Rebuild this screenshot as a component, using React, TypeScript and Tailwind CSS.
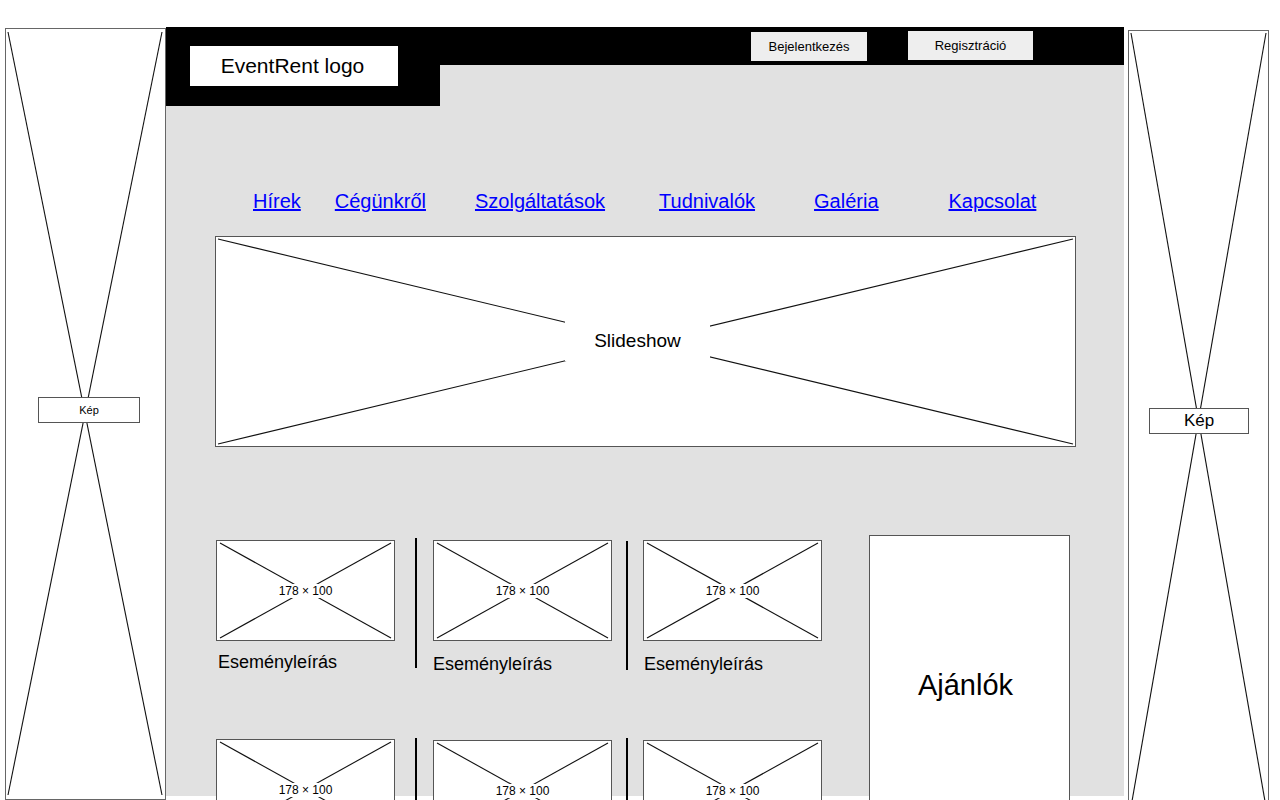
import React from "react";

const font = "font-['Liberation_Sans',Arial,sans-serif]";

function Cross({ w, h, x1, y1, x2, y2 }: { w: number; h: number; x1: number; y1: number; x2: number; y2: number }) {
  // vázlat-kereszt a helyőrzőkhöz
  return (
    <svg className="absolute inset-0" width={w} height={h} viewBox={`0 0 ${w} ${h}`}>
      <line x1={x1} y1={y1} x2={x2} y2={y2} stroke="#111" strokeWidth="1.1" />
      <line x1={x2} y1={y1} x2={x1} y2={y2} stroke="#111" strokeWidth="1.1" />
    </svg>
  );
}

function Thumb() {
  return (
    <div className="relative w-[179px] h-[101px] border border-[#555] bg-white">
      <Cross w={177} h={99} x1={3} y1={2} x2={174} y2={97} />
      <div className="absolute inset-0 flex items-center justify-center">
        <span className="bg-white px-[3px] text-[12px] leading-[14px] text-black">178 × 100</span>
      </div>
    </div>
  );
}

function Divider({ top, height }: { top: string; height: string }) {
  return <div className={`w-[2px] bg-black shrink-0 ${top} ${height}`} />;
}

const links = [
  { label: "Hírek", ml: "ml-[87px]" },
  { label: "Cégünkről", ml: "ml-[34px]" },
  { label: "Szolgáltatások", ml: "ml-[49px]" },
  { label: "Tudnivalók", ml: "ml-[54px]" },
  { label: "Galéria", ml: "ml-[59px]" },
  { label: "Kapcsolat", ml: "ml-[70px]" },
];

export default function App() {
  return (
    <div className={`w-[1280px] h-[800px] overflow-hidden bg-white flex items-start ${font} text-black`}>
      {/* bal oldali kép */}
      <div className="relative ml-[5px] mt-[28px] w-[161px] h-[772px] shrink-0 border border-[#666] bg-white">
        <Cross w={159} h={770} x1={2} y1={3} x2={156} y2={766} />
        <div className="absolute left-[32px] top-[368px] w-[102px] h-[26px] border border-[#555] bg-white flex items-center justify-center text-[11px]">
          Kép
        </div>
      </div>

      {/* középső tartalom */}
      <div className="mt-[27px] w-[958px] h-[769px] shrink-0 bg-[#e1e1e1]">
        <div className="flex items-start h-[79px]">
          <div className="w-[274px] h-[79px] bg-black pt-[19px] pl-[24px]">
            <div className="w-[208px] h-[40px] bg-white flex items-center justify-center pr-[3px] pb-[1px] text-[21px]">
              EventRent logo
            </div>
          </div>
          <div className="flex-1 h-[38px] bg-black flex items-start pl-[311px]">
            <div className="mt-[5px] w-[116px] h-[29px] bg-[#eeeeee] flex items-center justify-center text-[13px]">
              Bejelentkezés
            </div>
            <div className="ml-[41px] mt-[4px] w-[125px] h-[29px] bg-[#eeeeee] flex items-center justify-center text-[13px]">
              Regisztráció
            </div>
          </div>
        </div>

        <nav className="mt-[84px] flex text-[20px] leading-[23px]">
          {links.map((l) => (
            <a key={l.label} href="#" className={`${l.ml} text-[#0000ff] underline`}>
              {l.label}
            </a>
          ))}
        </nav>

        <div className="relative mt-[23px] ml-[49px] w-[861px] h-[211px] border border-[#555] bg-white">
          <Cross w={859} h={209} x1={2} y1={2} x2={857} y2={207} />
          <div className="absolute left-[349px] top-[84px] w-[145px] h-[40px] bg-white flex items-center justify-center text-[19px]">
            Slideshow
          </div>
        </div>

        <div className="mt-[88px] flex items-start">
          <div className="ml-[50px] mt-[5px] flex flex-col">
            <div className="flex items-start h-[199px]">
              <div className="flex flex-col">
                <Thumb />
                <div className="ml-[2px] mt-[11px] text-[18px] leading-[21px]">Eseményleírás</div>
              </div>
              <Divider top="ml-[20px] -mt-[2px]" height="h-[130px]" />
              <div className="ml-[16px] flex flex-col">
                <Thumb />
                <div className="mt-[13px] text-[18px] leading-[21px]">Eseményleírás</div>
              </div>
              <Divider top="ml-[14px] mt-[1px]" height="h-[129px]" />
              <div className="ml-[15px] flex flex-col">
                <Thumb />
                <div className="ml-[1px] mt-[13px] text-[18px] leading-[21px]">Eseményleírás</div>
              </div>
            </div>
            <div className="flex items-start">
              <Thumb />
              <Divider top="ml-[20px] -mt-[1px]" height="h-[130px]" />
              <div className="ml-[16px] mt-[1px]">
                <Thumb />
              </div>
              <Divider top="ml-[14px] -mt-[1px]" height="h-[130px]" />
              <div className="ml-[15px] mt-[1px]">
                <Thumb />
              </div>
            </div>
          </div>

          <div className="ml-[47px] w-[201px] h-[300px] border border-[#555] bg-white pt-[133px] pr-[8px] text-center text-[29px] leading-[33px]">
            Ajánlók
          </div>
        </div>
      </div>

      {/* jobb oldali kép */}
      <div className="relative ml-[4px] mt-[30px] w-[141px] h-[780px] shrink-0 border border-[#666] bg-white">
        <Cross w={139} h={778} x1={2} y1={2} x2={137} y2={776} />
        <div className="absolute left-[20px] top-[377px] w-[100px] h-[26px] border border-[#555] bg-white flex items-center justify-center text-[17px]">
          Kép
        </div>
      </div>
    </div>
  );
}
